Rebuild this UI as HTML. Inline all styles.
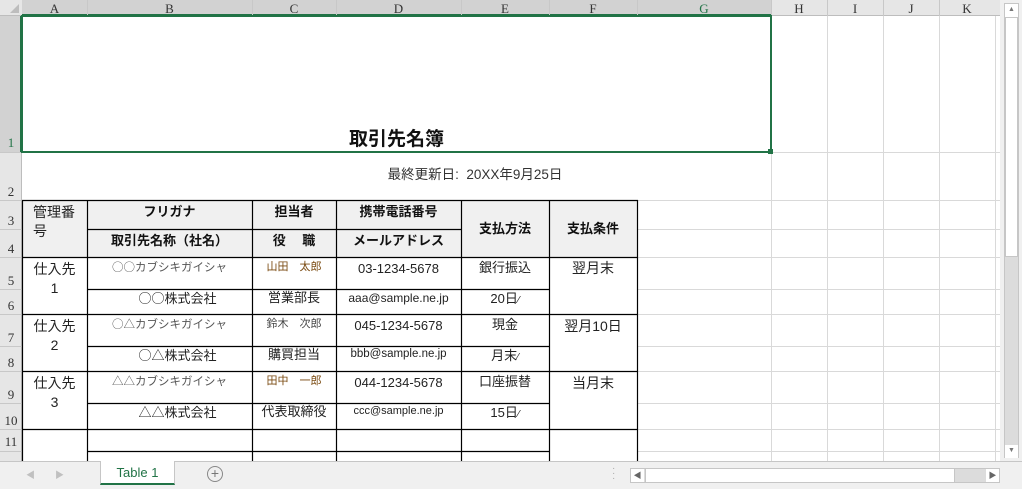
<!DOCTYPE html>
<html><head><meta charset="utf-8"><style>
*{margin:0;padding:0;box-sizing:border-box}
body{width:1022px;height:489px;overflow:hidden;background:#fff;position:relative;font-family:"Liberation Sans","Noto Sans CJK JP",sans-serif;color:#222}
.a{position:absolute}
.t{position:absolute;text-align:center;white-space:nowrap;font-size:13px;line-height:16px}
.h{position:absolute;font-family:"Liberation Serif",serif;font-size:13px;color:#333;text-align:center}
.b{font-weight:bold;color:#111}
.s{font-size:11.5px;color:#555}
.n{font-size:11px;color:#7a4a10}
.e{font-size:12px}
.j{font-family:"Noto Sans CJK JP",sans-serif}
</style></head><body>
<div class="a" style="left:0;top:0;width:1002px;height:16px;background:#e6e6e6;border-bottom:1px solid #bdbdbd"></div>
<div class="a" style="left:22px;top:0;width:749px;height:16px;background:#d2d2d2;border-bottom:2px solid #217346"></div>
<div class="a" style="left:0;top:16px;width:22px;height:445px;background:#e6e6e6;border-right:1px solid #bdbdbd"></div>
<div class="a" style="left:0;top:16px;width:22px;height:136px;background:#d2d2d2;border-right:2px solid #217346"></div>
<svg class="a" style="left:0;top:0" width="1022" height="489">
<polygon points="10,13 19,13 19,4" fill="#bdbdbd"/>
<g stroke="#c8c8c8" stroke-width="1">
<line x1="87.5" y1="0" x2="87.5" y2="16"/><line x1="252.5" y1="0" x2="252.5" y2="16"/><line x1="336.5" y1="0" x2="336.5" y2="16"/><line x1="461.5" y1="0" x2="461.5" y2="16"/><line x1="549.5" y1="0" x2="549.5" y2="16"/><line x1="637.5" y1="0" x2="637.5" y2="16"/><line x1="771.5" y1="0" x2="771.5" y2="16"/><line x1="827.5" y1="0" x2="827.5" y2="16"/><line x1="883.5" y1="0" x2="883.5" y2="16"/><line x1="939.5" y1="0" x2="939.5" y2="16"/>
<line x1="0" y1="152.5" x2="22" y2="152.5"/><line x1="0" y1="200.5" x2="22" y2="200.5"/><line x1="0" y1="229.5" x2="22" y2="229.5"/><line x1="0" y1="257.5" x2="22" y2="257.5"/><line x1="0" y1="289.5" x2="22" y2="289.5"/><line x1="0" y1="314.5" x2="22" y2="314.5"/><line x1="0" y1="346.5" x2="22" y2="346.5"/><line x1="0" y1="371.5" x2="22" y2="371.5"/><line x1="0" y1="403.5" x2="22" y2="403.5"/><line x1="0" y1="429.5" x2="22" y2="429.5"/><line x1="0" y1="451.5" x2="22" y2="451.5"/>
</g>
<g stroke="#d9d9d9" stroke-width="1">
<line x1="771.5" y1="16" x2="771.5" y2="461"/><line x1="827.5" y1="16" x2="827.5" y2="461"/><line x1="883.5" y1="16" x2="883.5" y2="461"/><line x1="939.5" y1="16" x2="939.5" y2="461"/><line x1="995.5" y1="16" x2="995.5" y2="461"/>
<line x1="771" y1="152.5" x2="1000" y2="152.5"/>
<line x1="637" y1="200.5" x2="1000" y2="200.5"/><line x1="637" y1="229.5" x2="1000" y2="229.5"/><line x1="637" y1="257.5" x2="1000" y2="257.5"/><line x1="637" y1="289.5" x2="1000" y2="289.5"/><line x1="637" y1="314.5" x2="1000" y2="314.5"/><line x1="637" y1="346.5" x2="1000" y2="346.5"/><line x1="637" y1="371.5" x2="1000" y2="371.5"/><line x1="637" y1="403.5" x2="1000" y2="403.5"/><line x1="637" y1="429.5" x2="1000" y2="429.5"/><line x1="637" y1="451.5" x2="1000" y2="451.5"/>
</g>
<rect x="22.5" y="200.5" width="527" height="57" fill="#f0f0f0"/>
<rect x="549.5" y="200.5" width="88" height="57" fill="#f0f0f0"/>
<g stroke="#000" stroke-width="1.2">
<line x1="22" y1="200.5" x2="638" y2="200.5"/>
<line x1="87" y1="229.5" x2="461" y2="229.5"/>
<line x1="22" y1="257.5" x2="638" y2="257.5"/>
<line x1="87" y1="289.5" x2="549" y2="289.5"/>
<line x1="22" y1="314.5" x2="638" y2="314.5"/>
<line x1="87" y1="346.5" x2="549" y2="346.5"/>
<line x1="22" y1="371.5" x2="638" y2="371.5"/>
<line x1="87" y1="403.5" x2="549" y2="403.5"/>
<line x1="22" y1="429.5" x2="638" y2="429.5"/>
<line x1="87" y1="451.5" x2="549" y2="451.5"/>
<line x1="22.5" y1="200" x2="22.5" y2="461"/><line x1="87.5" y1="200" x2="87.5" y2="461"/><line x1="252.5" y1="200" x2="252.5" y2="461"/><line x1="336.5" y1="200" x2="336.5" y2="461"/><line x1="461.5" y1="200" x2="461.5" y2="461"/><line x1="549.5" y1="200" x2="549.5" y2="461"/><line x1="637.5" y1="200" x2="637.5" y2="461"/>
</g>
<rect x="22" y="16" width="749" height="136" fill="none" stroke="#217346" stroke-width="2"/>
<rect x="768" y="149" width="5" height="5" fill="#217346"/>
</svg>
<div class="h" style="left:22px;top:1px;width:65px">A</div>
<div class="h" style="left:87px;top:1px;width:165px">B</div>
<div class="h" style="left:252px;top:1px;width:84px">C</div>
<div class="h" style="left:336px;top:1px;width:125px">D</div>
<div class="h" style="left:461px;top:1px;width:88px">E</div>
<div class="h" style="left:549px;top:1px;width:88px">F</div>
<div class="h" style="left:637px;top:1px;width:134px;color:#217346">G</div>
<div class="h" style="left:771px;top:1px;width:56px">H</div>
<div class="h" style="left:827px;top:1px;width:56px">I</div>
<div class="h" style="left:883px;top:1px;width:56px">J</div>
<div class="h" style="left:939px;top:1px;width:56px">K</div>
<div class="h" style="left:0;top:135px;width:22px;color:#217346">1</div>
<div class="h" style="left:0;top:184px;width:22px">2</div>
<div class="h" style="left:0;top:213px;width:22px">3</div>
<div class="h" style="left:0;top:241px;width:22px">4</div>
<div class="h" style="left:0;top:273px;width:22px">5</div>
<div class="h" style="left:0;top:298px;width:22px">6</div>
<div class="h" style="left:0;top:330px;width:22px">7</div>
<div class="h" style="left:0;top:355px;width:22px">8</div>
<div class="h" style="left:0;top:387px;width:22px">9</div>
<div class="h" style="left:0;top:413px;width:22px">10</div>
<div class="h" style="left:0;top:434px;width:22px">11</div>
<div class="t b" style="left:22px;top:128px;width:749px;font-size:19px;line-height:24px">取引先名簿</div>
<div class="t" style="left:380px;top:167px;width:190px;font-size:13.5px;color:#333">最終更新日:&nbsp;&nbsp;20XX年9月25日</div>
<div class="t" style="left:33px;top:203px;font-size:14px;text-align:left;line-height:19px">管理番<br>号</div>
<div class="t b" style="left:87px;top:204px;width:165px">フリガナ</div>
<div class="t b" style="left:87px;top:233px;width:165px">取引先名称（社名）</div>
<div class="t b" style="left:252px;top:204px;width:84px">担当者</div>
<div class="t b" style="left:252px;top:233px;width:84px">役　 職</div>
<div class="t b" style="left:336px;top:204px;width:125px">携帯電話番号</div>
<div class="t b" style="left:336px;top:233px;width:125px">メールアドレス</div>
<div class="t b" style="left:461px;top:221px;width:88px">支払方法</div>
<div class="t b" style="left:549px;top:221px;width:88px">支払条件</div>
<div class="t" style="left:22px;top:260px;width:65px;font-size:14px;line-height:19px">仕入先<br>1</div>
<div class="t s j" style="left:87px;top:259px;width:165px">○○カブシキガイシャ</div>
<div class="t j" style="left:95px;top:290px;width:165px">○○株式会社</div>
<div class="t n" style="left:252px;top:259px;width:84px">山田　太郎</div>
<div class="t" style="left:252px;top:290px;width:84px">営業部長</div>
<div class="t" style="left:336px;top:261px;width:125px">03-1234-5678</div>
<div class="t e" style="left:336px;top:290px;width:125px">aaa@sample.ne.jp</div>
<div class="t" style="left:461px;top:260px;width:88px">銀行振込</div>
<div class="t" style="left:461px;top:291px;width:88px">20日<span style="font-size:10px">⁄</span></div>
<div class="t" style="left:549px;top:260px;width:88px;font-size:14px">翌月末</div>
<div class="t" style="left:22px;top:317px;width:65px;font-size:14px;line-height:19px">仕入先<br>2</div>
<div class="t s j" style="left:87px;top:316px;width:165px">○△カブシキガイシャ</div>
<div class="t j" style="left:95px;top:347px;width:165px">○△株式会社</div>
<div class="t n" style="left:252px;top:316px;width:84px;color:#444">鈴木　次郎</div>
<div class="t" style="left:252px;top:347px;width:84px">購買担当</div>
<div class="t" style="left:336px;top:318px;width:125px">045-1234-5678</div>
<div class="t e" style="left:336px;top:346px;width:125px;font-size:11.5px">bbb@sample.ne.jp</div>
<div class="t" style="left:461px;top:317px;width:88px">現金</div>
<div class="t" style="left:461px;top:348px;width:88px">月末<span style="font-size:10px">⁄</span></div>
<div class="t" style="left:549px;top:318px;width:88px;font-size:14px">翌月10日</div>
<div class="t" style="left:22px;top:374px;width:65px;font-size:14px;line-height:19px">仕入先<br>3</div>
<div class="t s j" style="left:87px;top:373px;width:165px">△△カブシキガイシャ</div>
<div class="t j" style="left:95px;top:404px;width:165px">△△株式会社</div>
<div class="t n" style="left:252px;top:373px;width:84px">田中　一郎</div>
<div class="t" style="left:252px;top:404px;width:84px">代表取締役</div>
<div class="t" style="left:336px;top:375px;width:125px">044-1234-5678</div>
<div class="t e" style="left:336px;top:403px;width:125px;font-size:11px">ccc@sample.ne.jp</div>
<div class="t" style="left:461px;top:374px;width:88px">口座振替</div>
<div class="t" style="left:461px;top:405px;width:88px">15日<span style="font-size:10px">⁄</span></div>
<div class="t" style="left:549px;top:375px;width:88px;font-size:14px">当月末</div>
<div class="a" style="left:1000px;top:0;width:22px;height:461px;background:#f0f0f0"></div>
<div class="a" style="left:1004px;top:3px;width:15px;height:455px;background:#dcdcdc;border:1px solid #c6c6c6"></div>
<div class="a" style="left:1005px;top:17px;width:13px;height:240px;background:#fff;border:1px solid #c6c6c6"></div>
<div class="a" style="left:1005px;top:4px;width:13px;height:13px;background:#fff;font-size:7px;color:#777;text-align:center;line-height:12px">▲</div>
<div class="a" style="left:1005px;top:445px;width:13px;height:13px;background:#fff;font-size:7px;color:#777;text-align:center;line-height:12px">▼</div>
<div class="a" style="left:0;top:461px;width:1022px;height:28px;background:#f0f0f0;border-top:1px solid #c6c6c6"></div>
<div class="a" style="left:26px;top:468px;font-size:9px;color:#c0c0c0">◀</div>
<div class="a" style="left:55px;top:468px;font-size:9px;color:#c0c0c0">▶</div>
<div class="a" style="left:100px;top:461px;width:75px;height:24px;background:#fff;border:1px solid #c6c6c6;border-top:none;border-bottom:2px solid #217346;color:#217346;font-size:13px;text-align:center;line-height:24px">Table 1</div>
<div class="a" style="left:207px;top:466px;width:16px;height:16px;border:1.5px solid #888;border-radius:50%;color:#777;font-size:14px;line-height:13px;text-align:center">+</div>
<div class="a" style="left:612px;top:466px;font-size:10px;color:#aaa;line-height:5px">·<br>·<br>·</div>
<div class="a" style="left:630px;top:468px;width:370px;height:15px;background:#dcdcdc;border:1px solid #c6c6c6"></div>
<div class="a" style="left:645px;top:469px;width:310px;height:13px;background:#fff;border-left:1px solid #c6c6c6;border-right:1px solid #c6c6c6"></div>
<div class="a" style="left:631px;top:469px;width:13px;height:13px;background:#fff;font-size:8px;color:#666;line-height:13px;text-align:center">◀</div>
<div class="a" style="left:986px;top:469px;width:13px;height:13px;background:#fff;font-size:8px;color:#666;line-height:13px;text-align:center">▶</div>
</body></html>
